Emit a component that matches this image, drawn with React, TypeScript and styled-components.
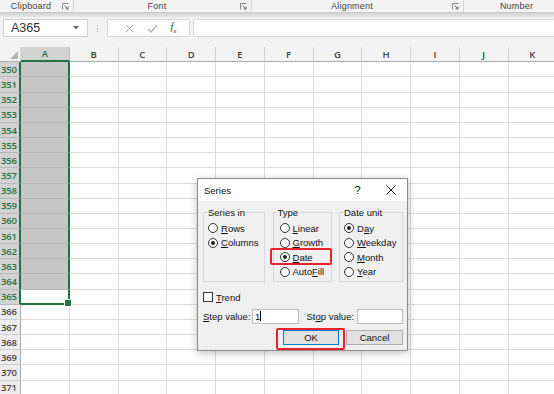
import styled, { createGlobalStyle } from "styled-components";

const GREEN = "#217346";
const COLS = ["A", "B", "C", "D", "E", "F", "G", "H", "I", "J", "K"];
const ROWS = Array.from({ length: 22 }, (_, i) => 350 + i);
const SEL_FIRST = 350;
const SEL_LAST = 365;

const GlobalStyle = createGlobalStyle`
  html, body { margin: 0; padding: 0; background: #fff; }
  body { font-family: "Liberation Sans", Arial, sans-serif; }
  * { box-sizing: border-box; }
`;

const Launcher = () => (
  <svg width="7" height="7" viewBox="0 0 7 7">
    <path d="M0.5 6.5V0.5H6.5" fill="none" stroke="#8a8a8a" strokeWidth="1" />
    <path d="M2.5 2.5L6 6M6 3.5V6H3.5" fill="none" stroke="#6a6a6a" strokeWidth="1" />
  </svg>
);

const ribbonGroups = [
  { label: "Clipboard", width: 74 },
  { label: "Font", width: 178 },
  { label: "Alignment", width: 212 },
  { label: "Number", width: 110, noLauncher: true },
];

type RadioItem = { pre?: string; key: string; post: string; checked?: boolean; highlight?: boolean };

const seriesIn: RadioItem[] = [
  { key: "R", post: "ows" },
  { key: "C", post: "olumns", checked: true },
];
const types: RadioItem[] = [
  { key: "L", post: "inear" },
  { key: "G", post: "rowth" },
  { key: "D", post: "ate", checked: true, highlight: true },
  { pre: "Auto", key: "F", post: "ill" },
];
const units: RadioItem[] = [
  { pre: "D", key: "a", post: "y", checked: true },
  { key: "W", post: "eekday" },
  { key: "M", post: "onth" },
  { key: "Y", post: "ear" },
];

const RadioGroup = ({ title, items, indent }: { title: string; items: RadioItem[]; indent: number }) => (
  <Group>
    <Legend>{title}</Legend>
    <RadioList $indent={indent}>
      {items.map((it) => (
        <RadioRow key={it.key + it.post} $highlight={it.highlight}>
          <RadioCircle $checked={it.checked} />
          <span>
            {it.pre}
            <u>{it.key}</u>
            {it.post}
          </span>
        </RadioRow>
      ))}
    </RadioList>
  </Group>
);

const App = () => {
  return (
    <Page>
      <GlobalStyle />
      <RibbonBar>
        {ribbonGroups.map((g) => (
          <RibbonGroup key={g.label} $width={g.width}>
            <RibbonLabel>{g.label}</RibbonLabel>
            {!g.noLauncher && <Launcher />}
          </RibbonGroup>
        ))}
      </RibbonBar>
      <RibbonShadow />
      <FormulaBar>
        <NameBox>
          <span>A365</span>
          <svg width="6" height="4" viewBox="0 0 6 4">
            <path d="M0 0H6L3 3.5Z" fill="#6a6a6a" />
          </svg>
        </NameBox>
        <Grip>
          <i />
          <i />
          <i />
        </Grip>
        <FxBox>
          <svg width="9" height="9" viewBox="0 0 9 9">
            <path d="M1 1L8 8M8 1L1 8" stroke="#b0b0b0" strokeWidth="1" />
          </svg>
          <svg width="11" height="9" viewBox="0 0 11 9">
            <path d="M1 5L4 8L10 1" fill="none" stroke="#b0b0b0" strokeWidth="1.2" />
          </svg>
          <Fx>
            f<sub>x</sub>
          </Fx>
        </FxBox>
        <FormulaInput />
      </FormulaBar>

      <Sheet>
        <Corner>
          <svg width="8" height="8" viewBox="0 0 8 8">
            <path d="M8 0V8H0Z" fill="#b4b4b4" />
          </svg>
        </Corner>
        {COLS.map((c) => (
          <ColHeader key={c} $selected={c === "A"}>
            {c}
          </ColHeader>
        ))}
        {ROWS.map((r) => {
          const sel = r >= SEL_FIRST && r <= SEL_LAST;
          return [
            <RowHeader key={`h${r}`} $selected={sel}>
              {r}
            </RowHeader>,
            ...COLS.map((c) =>
              c === "A" && sel ? (
                <SelCell key={c + r} $active={r === SEL_LAST} $last={r === SEL_LAST} />
              ) : (
                <Cell key={c + r} />
              )
            ),
          ];
        })}
      </Sheet>

      <Dialog>
        <TitleBar>
          <TitleText>Series</TitleText>
          <TitleButton>?</TitleButton>
          <TitleButton>
            <svg width="10" height="10" viewBox="0 0 10 10">
              <path d="M0.5 0.5L9.5 9.5M9.5 0.5L0.5 9.5" stroke="#222" strokeWidth="1" />
            </svg>
          </TitleButton>
        </TitleBar>
        <DialogBody>
          <Groups>
            <RadioGroup title="Series in" items={seriesIn} indent={4} />
            <RadioGroup title="Type" items={types} indent={6} />
            <RadioGroup title="Date unit" items={units} indent={4} />
          </Groups>
          <CheckRow>
            <CheckBox />
            <span>
              <u>T</u>rend
            </span>
          </CheckRow>
          <ValueRow>
            <ValueLabel $width={49}>
              <u>S</u>tep value:
            </ValueLabel>
            <ValueInput $width={47}>
              1<Caret />
            </ValueInput>
            <ValueLabel $width={50} style={{ marginLeft: 8 }}>
              St<u>o</u>p value:
            </ValueLabel>
            <ValueInput $width={47} />
          </ValueRow>
          <ButtonRow>
            <DialogButton $primary>OK</DialogButton>
            <DialogButton>Cancel</DialogButton>
          </ButtonRow>
        </DialogBody>
      </Dialog>
    </Page>
  );
};
export default App;

const Page = styled.div`
  width: 554px;
  height: 394px;
  overflow: hidden;
  position: relative;
  background: #fff;
`;

const RibbonBar = styled.div`
  height: 12px;
  display: flex;
  background: #f3f3f3;
  font-size: 9px;
  color: #444;
`;

const RibbonGroup = styled.div<{ $width: number }>`
  width: ${(p) => p.$width}px;
  flex-shrink: 0;
  display: flex;
  align-items: center;
  padding-right: 4px;
  border-right: 1px solid #d6d6d6;
`;

const RibbonLabel = styled.div`
  flex: 1;
  text-align: center;
  line-height: 12px;
  letter-spacing: 0.2px;
`;

const RibbonShadow = styled.div`
  height: 5px;
  background: linear-gradient(#d4d4d4, #e6e6e6);
  border-top: 1px solid #c8c8c8;
`;

const FormulaBar = styled.div`
  height: 30px;
  display: flex;
  align-items: flex-start;
  padding: 2px 0 0 3px;
  background: #f3f3f3;
`;

const NameBox = styled.div`
  width: 85px;
  height: 18px;
  display: flex;
  align-items: center;
  justify-content: space-between;
  padding: 0 8px 0 7px;
  background: #fff;
  border: 1px solid #d0d0d0;
  font-size: 12.5px;
  color: #333;
`;

const Grip = styled.div`
  width: 19px;
  height: 18px;
  display: flex;
  flex-direction: column;
  align-items: center;
  justify-content: center;
  gap: 2px;
  i {
    width: 1px;
    height: 1px;
    background: #a8a8a8;
  }
`;

const FxBox = styled.div`
  width: 83px;
  height: 18px;
  display: flex;
  align-items: center;
  justify-content: space-around;
  padding: 0 6px 0 10px;
  background: #fff;
  border: 1px solid #d8d8d8;
`;

const Fx = styled.span`
  font-family: "Liberation Serif", "Times New Roman", serif;
  font-style: italic;
  font-size: 10px;
  color: #333;
  sub {
    font-size: 7px;
  }
`;

const FormulaInput = styled.div`
  flex: 1;
  height: 18px;
  margin-left: 3px;
  background: #fff;
  border: 1px solid #d8d8d8;
  border-right: none;
`;

const Sheet = styled.div`
  display: grid;
  grid-template-columns: 21px repeat(11, 48.75px);
  grid-template-rows: 15.3px repeat(22, 15.17px);
  font-family: "Open Sans", "Liberation Sans", sans-serif;
  font-size: 9.5px;
`;

const Corner = styled.div`
  background: #f3f3f3;
  border-right: 1px solid #d4d4d4;
  border-bottom: 1px solid #ababab;
  display: flex;
  align-items: flex-end;
  justify-content: flex-end;
  padding: 0 2px 2px 0;
`;

const ColHeader = styled.div<{ $selected?: boolean }>`
  display: flex;
  align-items: center;
  justify-content: center;
  font-weight: 600;
  background: ${(p) => (p.$selected ? "#d2d2d2" : "#f3f3f3")};
  color: ${(p) => (p.$selected ? GREEN : "#444")};
  border-right: 1px solid ${(p) => (p.$selected ? "#c0c0c0" : "#d4d4d4")};
  border-bottom: ${(p) => (p.$selected ? `2px solid ${GREEN}` : "1px solid #ababab")};
`;

const RowHeader = styled.div<{ $selected?: boolean }>`
  display: flex;
  align-items: center;
  padding-left: 1px;
  font-size: 9.5px;
  font-weight: 600;
  letter-spacing: -0.2px;
  background: ${(p) => (p.$selected ? "#d2d2d2" : "#ededed")};
  color: ${(p) => (p.$selected ? GREEN : "#444")};
  border-bottom: 1px solid ${(p) => (p.$selected ? "#b8b8b8" : "#d0d0d0")};
  border-right: ${(p) => (p.$selected ? `2px solid ${GREEN}` : "1px solid #ababab")};
  overflow: hidden;
`;

const Cell = styled.div`
  background: #fff;
  border-right: 1px solid #dadada;
  border-bottom: 1px solid #dadada;
`;

const SelCell = styled.div<{ $active?: boolean; $last?: boolean }>`
  position: relative;
  background: ${(p) => (p.$active ? "#fff" : "#c6c6c6")};
  border-right: 2px solid ${GREEN};
  border-bottom: ${(p) => (p.$last ? `2px solid ${GREEN}` : "1px solid #b8b8b8")};
  &::after {
    content: "";
    display: ${(p) => (p.$last ? "block" : "none")};
    position: absolute;
    right: -4px;
    bottom: -4px;
    width: 6px;
    height: 6px;
    background: ${GREEN};
    border: 1px solid #fff;
  }
`;

const Dialog = styled.div`
  position: absolute;
  left: 197px;
  top: 178px;
  width: 211px;
  height: 173px;
  border: 1px solid #8c8c8c;
  box-shadow: 0 2px 8px rgba(0, 0, 0, 0.25);
  font-size: 9.5px;
  color: #111;
  display: flex;
  flex-direction: column;
`;

const TitleBar = styled.div`
  height: 22px;
  display: flex;
  align-items: center;
  background: #fff;
`;

const TitleText = styled.div`
  flex: 1;
  padding-left: 6px;
  font-size: 9.5px;
`;

const TitleButton = styled.div`
  width: 33px;
  height: 22px;
  display: flex;
  align-items: center;
  justify-content: center;
  font-size: 11px;
`;

const DialogBody = styled.div`
  flex: 1;
  background: #f0f0f0;
  padding: 6px 4px 0 5px;
  display: flex;
  flex-direction: column;
`;

const Groups = styled.div`
  display: flex;
  justify-content: space-between;
`;

const Group = styled.fieldset`
  margin: 0;
  padding: 0;
  min-width: 0;
  height: 75px;
  border: 1px solid #d6d6d6;
  &:nth-child(1) {
    width: 62px;
  }
  &:nth-child(2) {
    width: 59px;
  }
  &:nth-child(3) {
    width: 64px;
  }
`;

const Legend = styled.legend`
  margin-left: 3px;
  padding: 0 1px;
  line-height: 11px;
  font-size: 9.5px;
`;

const RadioList = styled.div<{ $indent: number }>`
  display: flex;
  flex-direction: column;
  padding: 3px 0 0 ${(p) => p.$indent}px;
`;

const RadioRow = styled.div<{ $highlight?: boolean }>`
  position: relative;
  height: 14.5px;
  display: flex;
  align-items: center;
  gap: 3px;
  white-space: nowrap;
  &::after {
    content: "";
    display: ${(p) => (p.$highlight ? "block" : "none")};
    position: absolute;
    left: -10px;
    top: -2.5px;
    width: 58px;
    bottom: -0.5px;
    border: 2px solid #e8222a;
    border-radius: 2px;
  }
`;

const RadioCircle = styled.span<{ $checked?: boolean }>`
  width: 10px;
  height: 10px;
  flex-shrink: 0;
  border-radius: 50%;
  border: 1px solid #333;
  background: #fff;
  display: flex;
  align-items: center;
  justify-content: center;
  &::before {
    content: "";
    width: 4px;
    height: 4px;
    border-radius: 50%;
    background: ${(p) => (p.$checked ? "#222" : "transparent")};
  }
`;

const CheckRow = styled.div`
  height: 14px;
  margin-top: 8px;
  display: flex;
  align-items: center;
  gap: 3px;
`;

const CheckBox = styled.span`
  width: 10px;
  height: 10px;
  border: 1px solid #333;
  background: #fff;
`;

const ValueRow = styled.div`
  height: 15px;
  margin-top: 4.5px;
  display: flex;
  align-items: center;
`;

const ValueLabel = styled.span<{ $width: number }>`
  width: ${(p) => p.$width}px;
  flex-shrink: 0;
  white-space: nowrap;
`;

const ValueInput = styled.div<{ $width: number }>`
  width: ${(p) => p.$width}px;
  height: 15px;
  display: flex;
  align-items: center;
  padding-left: 2px;
  background: #fff;
  border: 1px solid #bdbdbd;
`;

const Caret = styled.span`
  width: 1px;
  height: 10px;
  background: #000;
`;

const ButtonRow = styled.div`
  margin-top: 6.5px;
  display: flex;
  justify-content: flex-end;
  gap: 7px;
`;

const DialogButton = styled.div<{ $primary?: boolean }>`
  position: relative;
  width: ${(p) => (p.$primary ? 56 : 57)}px;
  height: 14.5px;
  display: flex;
  align-items: center;
  justify-content: center;
  background: #e1e1e1;
  border: 1px solid ${(p) => (p.$primary ? "#0078d7" : "#adadad")};
  &::after {
    content: "";
    display: ${(p) => (p.$primary ? "block" : "none")};
    position: absolute;
    left: -8px;
    right: -6.5px;
    top: -3.5px;
    bottom: -6px;
    border: 2px solid #e8222a;
    border-radius: 2px;
  }
`;
